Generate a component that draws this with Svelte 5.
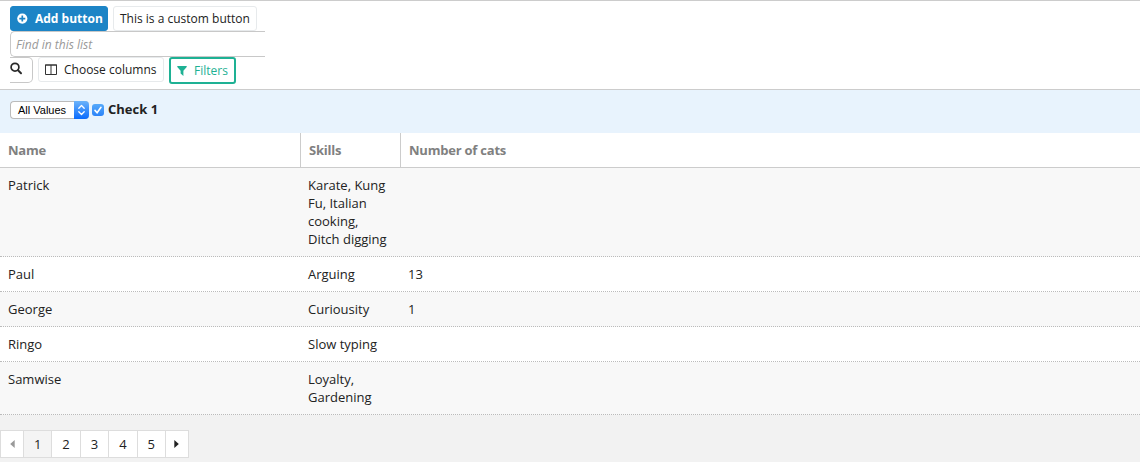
<script>
  const rows = [
    { name: 'Patrick', skills: ['Karate, Kung', 'Fu, Italian', 'cooking,', 'Ditch digging'], cats: '' },
    { name: 'Paul', skills: ['Arguing'], cats: '13' },
    { name: 'George', skills: ['Curiousity'], cats: '1' },
    { name: 'Ringo', skills: ['Slow typing'], cats: '' },
    { name: 'Samwise', skills: ['Loyalty,', 'Gardening'], cats: '' }
  ];
  const pages = [1, 2, 3, 4, 5];
</script>

<div class="list">
  <div class="toolbar">
    <div class="line">
      <button class="btn primary">
        <svg width="11" height="11" viewBox="0 0 11 11"><circle cx="5.3" cy="5.6" r="5.1" fill="#fff" /><path d="M5.3 2.6v6M2.3 5.6h6" stroke="#1c84c6" stroke-width="1.7" /></svg>
        <span>Add button</span>
      </button>
      <button class="btn custom">This is a custom button</button>
    </div>
    <div class="search">Find in this list</div>
    <div class="line third">
      <button class="find" aria-label="Find">
        <svg width="13" height="13" viewBox="0 0 13 13"><circle cx="5" cy="5.2" r="3.9" fill="none" stroke="#2a2a2a" stroke-width="1.7" /><path d="M8 8.2l3 3" stroke="#2a2a2a" stroke-width="2" stroke-linecap="round" /></svg>
      </button>
      <button class="btn columns">
        <svg width="12" height="11" viewBox="0 0 12 11"><path d="M.5 1h11v9.5H.5zM6 1v9.5M0 1h12" fill="none" stroke="#333" /></svg>
        <span>Choose columns</span>
      </button>
      <button class="btn filters">
        <svg width="10" height="10" viewBox="0 0 10 10"><path d="M.3 0h9.4v1L6.4 4.7V10L3.6 7.6V4.7L.3 1z" fill="#1eb194" /></svg>
        <span>Filters</span>
      </button>
    </div>
  </div>

  <div class="filterbar">
    <div class="select">
      <span>All Values</span>
      <i><svg width="15" height="18" viewBox="0 0 15 18"><path d="M4.8 7.2l2.7-2.7 2.7 2.7M4.8 10.8l2.7 2.7 2.7-2.7" fill="none" stroke="#fff" stroke-width="1.3" stroke-linecap="round" stroke-linejoin="round" /></svg></i>
    </div>
    <div class="check"><svg width="12" height="12" viewBox="0 0 12 12"><path d="M3 6.4l2.1 2.3L9 3.3" fill="none" stroke="#fff" stroke-width="1.6" stroke-linecap="round" /></svg></div>
    <b>Check 1</b>
  </div>

  <div class="row head">
    <div>Name</div>
    <div>Skills</div>
    <div>Number of cats</div>
  </div>
  {#each rows as row}
    <div class="row data">
      <div>{row.name}</div>
      <div>{#each row.skills as line}<p>{line}</p>{/each}</div>
      <div>{row.cats}</div>
    </div>
  {/each}

  <div class="footer">
    <div class="pages">
      <button class="arrow" aria-label="Previous"><svg width="5" height="8" viewBox="0 0 5 8"><path d="M4.7 0v8L.2 4z" fill="#999" /></svg></button>
      {#each pages as page}
        <button class:current={page === 1}>{page}</button>
      {/each}
      <button class="arrow" aria-label="Next"><svg width="5" height="8" viewBox="0 0 5 8"><path d="M.3 0v8l4.5-4z" fill="#222" /></svg></button>
    </div>
  </div>
</div>

<style>
  :global(body) { background: #f2f2f2; }
  .list {
    height: 462px;
    overflow: hidden;
    box-sizing: border-box;
    border-top: 1px solid #ccc;
    font: 13px/18px "Open Sans", sans-serif;
    color: #222;
  }
  .list :global(*) { box-sizing: border-box; }
  svg { display: block; flex: none; }
  button { font: inherit; color: inherit; margin: 0; padding: 0; background: #fff; border: 0; display: flex; align-items: center; white-space: nowrap; }
  .toolbar { height: 89px; padding: 5px 10px 0; background: #fff; border-bottom: 1px solid #ccc; }
  .line { display: flex; gap: 5px; height: 25px; }
  .btn { height: 25px; border: 1px solid #e7eaec; border-radius: 3px; font-size: 12px; }
  .primary { width: 98px; padding-left: 6px; gap: 7px; background: #1c84c6; border-color: #1c84c6; color: #fff; font-weight: 700; }
  .custom { width: 144px; padding-left: 6px; }
  .search {
    width: 255px;
    height: 26px;
    padding: 4px 0 0 5px;
    border: 1px solid #c8c8c8;
    border-right: 0;
    border-radius: 5px 0 0 5px;
    color: #999;
    font-size: 12px;
    font-style: italic;
  }
  .third { height: 27px; }
  .find { width: 23px; height: 26px; border: 1px solid #c8c8c8; border-left: 0; border-radius: 0 5px 5px 0; }
  .find svg { margin-top: -3px; }
  .columns { width: 126px; padding-left: 6px; gap: 7px; }
  .filters { width: 67px; height: 27px; padding-left: 6px; gap: 7px; border: 2px solid #1eb194; color: #1eb194; }
  .filterbar { display: flex; align-items: flex-start; height: 43px; padding: 11px 10px; background: #e8f3fd; }
  .select {
    display: flex;
    width: 79px;
    height: 18px;
    border: 1px solid #bbb;
    border-right: 0;
    border-radius: 4px;
    background: #fff;
    color: #000;
    font: 11px/17px "Liberation Sans", sans-serif;
  }
  .select span { width: 63px; padding-left: 7px; white-space: nowrap; }
  .select i { width: 15px; height: 18px; margin-top: -1px; border-radius: 0 4px 4px 0; background: linear-gradient(#6bb3fa, #0a6bfd); }
  .check { width: 12px; height: 12px; margin: 3px 4px 0 3px; border-radius: 3px; background: linear-gradient(#55a9fa, #2b83f8); }
  b { font-weight: 700; margin-top: -1px; }
  .row { display: grid; grid-template-columns: 300px 100px 1fr; }
  .row > div { padding: 8px; }
  .head { height: 35px; background: #fff; border-bottom: 1px solid #ccc; color: #808080; font-weight: 700; letter-spacing: -0.22px; }
  .head > div + div { border-left: 1px solid #ccc; }
  .data { background: #fff; border-bottom: 1px dotted #bbb; }
  .data:nth-child(even) { background: #f8f8f8; }
  p { margin: 0; white-space: nowrap; }
  .footer { padding-top: 15px; }
  .pages { display: flex; }
  .pages button { width: 28.4px; height: 28px; justify-content: center; border: 1px solid #ddd; border-left: 0; }
  .pages .arrow { width: 23px; }
  .pages .arrow:first-child { width: 24px; border-left: 1px solid #ddd; }
  .pages .current { background: #f4f4f4; }
</style>
